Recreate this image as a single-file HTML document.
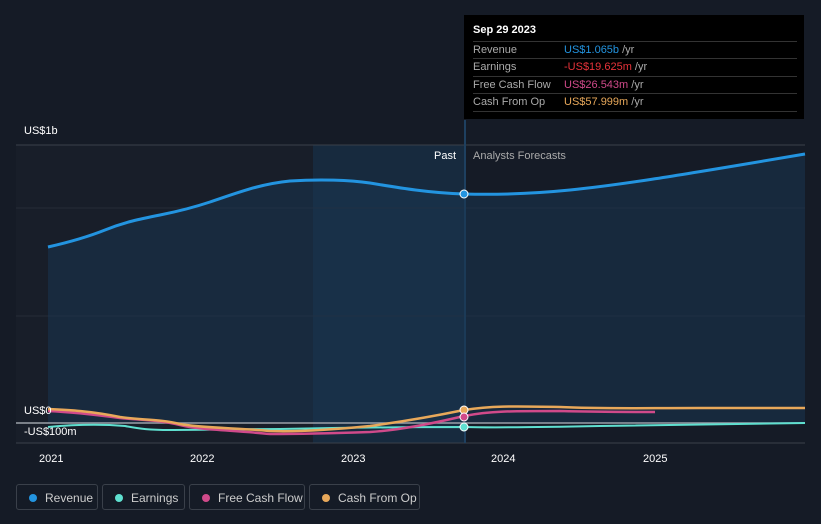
<!DOCTYPE html>
<html><head><style>
body{margin:0;background:#151b26;font-family:"Liberation Sans",sans-serif;}
.wrap{position:relative;width:821px;height:524px;overflow:hidden;background:#151b26}
.tip{position:absolute;left:464px;top:15px;width:340px;height:104px;background:#000;}
.tip .d{position:absolute;left:9px;top:9px;color:#fff;font-size:11px;font-weight:bold}
.row{position:absolute;left:9px;width:324px;border-top:1px solid #333;font-size:11px;height:17px;line-height:17px;color:#aaa}
.row span.v{position:absolute;left:91px}
.lg{position:absolute;top:484px;height:26px;border:1px solid #3a404a;border-radius:3px;color:#ccc;font-size:12px;line-height:26px;box-sizing:border-box;padding-left:28px}
.lg i{position:absolute;left:12px;top:9px;width:8px;height:8px;border-radius:50%}
.ax{position:absolute;color:#fff;font-size:11px}
</style></head><body><div class="wrap">
<svg width="821" height="524" style="position:absolute;left:0;top:0">
<rect x="16" y="145" width="297" height="298" fill="#181e29"/>
<rect x="313" y="145" width="152" height="298" fill="#172a3e"/>
<line x1="16" y1="145" x2="805" y2="145" stroke="#3a404a"/>
<line x1="16" y1="208" x2="805" y2="208" stroke="#262c37"/>
<line x1="16" y1="316" x2="805" y2="316" stroke="#262c37"/>
<line x1="16" y1="443" x2="805" y2="443" stroke="#3a404a"/>
<line x1="465" y1="120" x2="465" y2="443" stroke="#1e4060" stroke-width="2"/>
<path d="M48,247 C70,242 90,236 105,230 C125,222 140,219 160,215 C180,211 195,207 210,202 C240,192 260,184 290,181 C320,179 350,180 370,183 C400,188 430,193 464,194 C500,195 540,193 570,190 C620,185 680,175 740,165 L805,154 L805,423 L48,423 Z" fill="#1a3550" opacity="0.55"/>
<path d="M48,247 C70,242 90,236 105,230 C125,222 140,219 160,215 C180,211 195,207 210,202 C240,192 260,184 290,181 C320,179 350,180 370,183 C400,188 430,193 464,194 C500,195 540,193 570,190 C620,185 680,175 740,165 L805,154" fill="none" stroke="#2394e0" stroke-width="3"/>
<line x1="16" y1="423" x2="805" y2="423" stroke="#9aa0a8" stroke-width="1.5"/>
<path d="M48,427 C70,425 100,424 125,426 C140,429 150,430 170,430 C200,430 240,429 280,429 C330,428 400,427 464,427 C500,428 550,427 600,426 C700,425 760,424 805,423" fill="none" stroke="#5fe0d0" stroke-width="2"/>
<path d="M48,411 C70,412 90,414 120,418 C140,420 160,420 180,425 C200,430 230,430 270,434 C300,434 340,433 370,432 C400,430 430,424 464,416 C490,411 510,411 560,411 C600,412 630,412 655,412" fill="none" stroke="#d04a8a" stroke-width="2.5"/>
<path d="M48,409 C70,410 90,411 120,417 C140,420 160,419 180,424 C200,428 240,428 270,431 C300,432 340,429 370,426 C400,422 430,417 464,410 C490,406 510,406 560,407 C600,409 640,408 700,408 C760,408 790,408 805,408" fill="none" stroke="#e8a85a" stroke-width="2.5"/>
<circle cx="464" cy="194" r="4" fill="#2394e0" stroke="#fff" stroke-width="1"/>
<circle cx="464" cy="410" r="4" fill="#e8a85a" stroke="#fff" stroke-width="1"/>
<circle cx="464" cy="417" r="4" fill="#d04a8a" stroke="#fff" stroke-width="1"/>
<circle cx="464" cy="427" r="4" fill="#5fe0d0" stroke="#fff" stroke-width="1"/>
</svg>
<div class="ax" style="left:24px;top:125px">US$1b</div>
<div class="ax" style="left:24px;top:405px">US$0</div>
<div class="ax" style="left:24px;top:426px">-US$100m</div>
<div class="ax" style="left:434px;top:150px">Past</div>
<div class="ax" style="left:473px;top:150px;color:#aaa">Analysts Forecasts</div>
<div class="ax" style="left:39px;top:453px">2021</div>
<div class="ax" style="left:190px;top:453px">2022</div>
<div class="ax" style="left:341px;top:453px">2023</div>
<div class="ax" style="left:491px;top:453px">2024</div>
<div class="ax" style="left:643px;top:453px">2025</div>
<div class="tip"><div class="d">Sep 29 2023</div>
<div class="row" style="top:26px">Revenue<span class="v"><span style="color:#2394e0">US$1.065b</span> /yr</span></div>
<div class="row" style="top:43px">Earnings<span class="v"><span style="color:#e8333a">-US$19.625m</span> /yr</span></div>
<div class="row" style="top:61px">Free Cash Flow<span class="v"><span style="color:#d04a8a">US$26.543m</span> /yr</span></div>
<div class="row" style="top:78px">Cash From Op<span class="v"><span style="color:#e8a85a">US$57.999m</span> /yr</span></div>
<div class="row" style="top:96px;height:0"></div>
</div>
<div class="lg" style="left:16px;width:82px"><i style="background:#2394e0"></i>Revenue</div>
<div class="lg" style="left:102px;width:83px"><i style="background:#5fe0d0"></i>Earnings</div>
<div class="lg" style="left:189px;width:116px"><i style="background:#d04a8a"></i>Free Cash Flow</div>
<div class="lg" style="left:309px;width:111px"><i style="background:#e8a85a"></i>Cash From Op</div>
</div></body></html>
